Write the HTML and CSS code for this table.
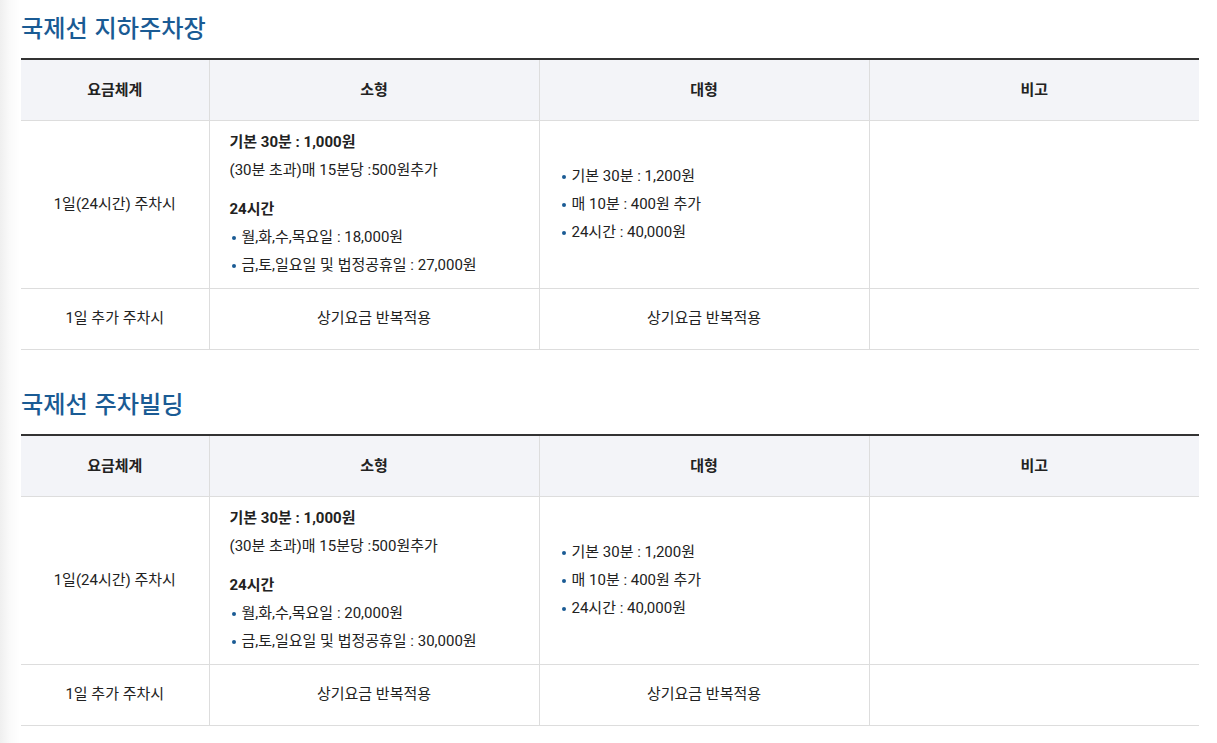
FILE: index.html
```html
<!DOCTYPE html>
<html lang="ko">
<head>
<meta charset="utf-8">
<link rel="stylesheet" href="styles.css">
</head>
<body>
<div class="page">
  <section class="section">
    <h2 class="title">국제선 지하주차장</h2>
    <table class="fee">
      <colgroup><col class="c1"><col class="c2"><col class="c3"><col class="c4"></colgroup>
      <thead>
        <tr><th>요금체계</th><th>소형</th><th>대형</th><th>비고</th></tr>
      </thead>
      <tbody>
        <tr>
          <td class="center">1일(24시간) 주차시</td>
          <td class="left">
            <p class="strong">기본 30분 : 1,000원</p>
            <p>(30분 초과)매 15분당 :500원추가</p>
            <p class="strong gap">24시간</p>
            <ul class="dots">
              <li>월,화,수,목요일 : 18,000원</li>
              <li>금,토,일요일 및 법정공휴일 : 27,000원</li>
            </ul>
          </td>
          <td class="left large">
            <ul class="dots">
              <li>기본 30분 : 1,200원</li>
              <li>매 10분 : 400원 추가</li>
              <li>24시간 : 40,000원</li>
            </ul>
          </td>
          <td></td>
        </tr>
        <tr class="short">
          <td class="center">1일 추가 주차시</td>
          <td class="center">상기요금 반복적용</td>
          <td class="center">상기요금 반복적용</td>
          <td></td>
        </tr>
      </tbody>
    </table>
  </section>
  <section class="section">
    <h2 class="title">국제선 주차빌딩</h2>
    <table class="fee">
      <colgroup><col class="c1"><col class="c2"><col class="c3"><col class="c4"></colgroup>
      <thead>
        <tr><th>요금체계</th><th>소형</th><th>대형</th><th>비고</th></tr>
      </thead>
      <tbody>
        <tr>
          <td class="center">1일(24시간) 주차시</td>
          <td class="left">
            <p class="strong">기본 30분 : 1,000원</p>
            <p>(30분 초과)매 15분당 :500원추가</p>
            <p class="strong gap">24시간</p>
            <ul class="dots">
              <li>월,화,수,목요일 : 20,000원</li>
              <li>금,토,일요일 및 법정공휴일 : 30,000원</li>
            </ul>
          </td>
          <td class="left large">
            <ul class="dots">
              <li>기본 30분 : 1,200원</li>
              <li>매 10분 : 400원 추가</li>
              <li>24시간 : 40,000원</li>
            </ul>
          </td>
          <td></td>
        </tr>
        <tr class="short">
          <td class="center">1일 추가 주차시</td>
          <td class="center">상기요금 반복적용</td>
          <td class="center">상기요금 반복적용</td>
          <td></td>
        </tr>
      </tbody>
    </table>
  </section>
</div>
</body>
</html>
```

FILE: styles.css
```css
html, body {
  margin: 0;
  padding: 0;
}
body {
  background: linear-gradient(to right, #efefef 0px, #fafafa 10px, #ffffff 20px);
  font-family: "Roboto", "Noto Sans CJK KR", sans-serif;
  color: #222;
  font-size: 15px;
  min-height: 743px;
}
.page {
  padding: 11px 18px 0 21px;
}
.section + .section {
  margin-top: 37px;
}
.title {
  margin: 0 0 17px;
  padding-top: 2px;
  font-family: "Noto Sans CJK KR", sans-serif;
  font-size: 24.2px;
  line-height: 28px;
  font-weight: 500;
  color: #1a5b94;
  letter-spacing: 0;
}
.fee {
  width: 1178px;
  border-collapse: collapse;
  table-layout: fixed;
  border-top: 2px solid #333;
  background: #fff;
}
.c1 { width: 188px; }
.c2, .c3, .c4 { width: 330px; }
.fee th {
  height: 56px;
  padding: 0 0 4px;
  background: #f3f4f8;
  font-weight: 700;
  font-size: 15px;
  color: #222;
  border-bottom: 1px solid #ddd;
  border-left: 1px solid #ddd;
  font-family: "Roboto", "Noto Sans CJK KR", sans-serif;
}
.fee td {
  padding: 0 0 2px;
  border-bottom: 1px solid #ddd;
  border-left: 1px solid #ddd;
  vertical-align: middle;
  font-size: 15px;
  line-height: 28px;
}
.fee tr.short td {
  height: 58px;
}
.fee th:first-child, .fee td:first-child {
  border-left: none;
}
.fee td.center {
  text-align: center;
}
.fee td.left {
  padding: 7px 20px 9px 20px;
  text-align: left;
}
.fee td.left.large {
  padding-left: 20px;
}
.fee p {
  margin: 0;
}
.fee p.strong {
  font-weight: 700;
}
.fee p.gap {
  margin-top: 11px;
}
.dots {
  list-style: none;
  margin: 0;
  padding: 0;
}
.dots li {
  position: relative;
  padding-left: 12px;
}
.dots li::before {
  content: "";
  position: absolute;
  left: 2px;
  top: 13px;
  width: 4px;
  height: 4px;
  border-radius: 50%;
  background: #1a5b94;
}
```
